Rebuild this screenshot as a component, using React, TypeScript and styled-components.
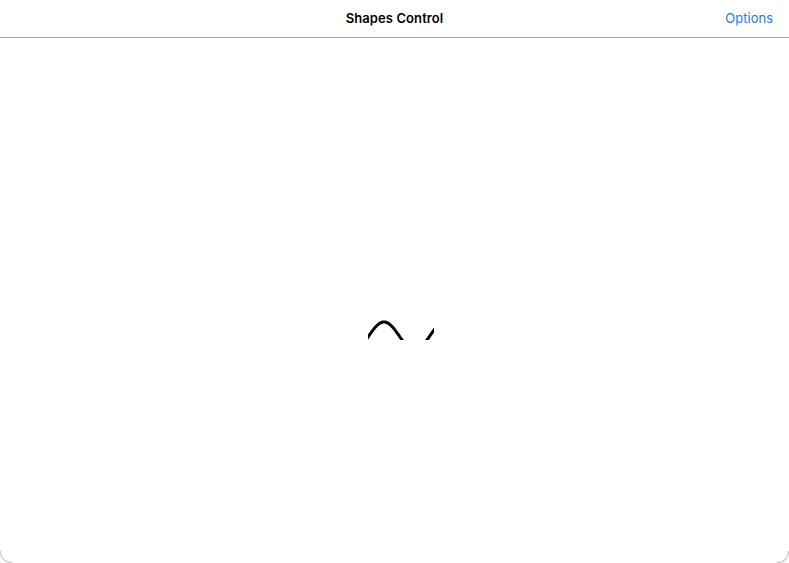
import React from 'react';
import styled, { createGlobalStyle } from 'styled-components';

// Global
const GlobalStyle = createGlobalStyle`
  html, body {
    margin: 0;
    padding: 0;
    background: #ffffff;
  }
  body {
    font-family: Inter, "Liberation Sans", Arial, sans-serif;
  }
`;

// Wave data: sine clipped to the visible window of the canvas
const WAVE_LEFT = 369;
const WAVE_WIDTH = 66;
const WAVE_HEIGHT = 30;
const buildWave = () => {
  const pts: string[] = [];
  for (let x = -4; x <= WAVE_WIDTH + 4; x += 1) {
    const dx = x + WAVE_LEFT - 385;
    const y = 336 - 14 * Math.cos((2 * Math.PI * dx) / 61) - 311;
    pts.push(`${x},${y.toFixed(2)}`);
  }
  return pts.join(' ');
};

const App = () => {
  return (
    <>
      <GlobalStyle />
      <Screen>
        <NavBar>
          <Spacer />
          <Title>Shapes Control</Title>
          <NavButton type='button'>Options</NavButton>
        </NavBar>
        <Canvas>
          <WaveBox>
            <svg width={WAVE_WIDTH} height={WAVE_HEIGHT} viewBox={`0 0 ${WAVE_WIDTH} ${WAVE_HEIGHT}`}>
              <polyline
                points={buildWave()}
                fill='none'
                stroke='#000'
                strokeWidth={3}
                strokeLinecap='butt'
              />
            </svg>
          </WaveBox>
        </Canvas>
        <Corner side='left' />
        <Corner side='right' />
      </Screen>
    </>
  );
};

// Styled
const Screen = styled.div`
  position: relative;
  display: flex;
  flex-direction: column;
  width: 789px;
  height: 563px;
  background: #ffffff;
  overflow: hidden;
`;

const NavBar = styled.header`
  display: grid;
  grid-template-columns: 1fr auto 1fr;
  align-items: center;
  box-sizing: border-box;
  height: 38px;
  padding: 0 16px 2px;
  border-bottom: 1px solid #a9a9a9;
  flex-shrink: 0;
`;

const Spacer = styled.div``;

const Title = styled.h1`
  margin: 0;
  font-size: 13px;
  font-weight: 600;
  color: #000;
  letter-spacing: 0.1px;
`;

const NavButton = styled.button`
  justify-self: end;
  border: none;
  background: none;
  padding: 0;
  margin-top: 1px;
  font-family: inherit;
  font-size: 13px;
  color: #1a7cf5;
  cursor: pointer;
`;

const Canvas = styled.main`
  flex: 1;
  display: flex;
  justify-content: center;
  align-items: flex-start;
  padding-top: 273px;
`;

const WaveBox = styled.div`
  width: ${WAVE_WIDTH}px;
  height: 29px;
  margin-left: 13px;
  overflow: hidden;

  svg {
    display: block;
  }
`;

const Corner = styled.div<{ side: 'left' | 'right' }>`
  position: absolute;
  bottom: 0;
  width: 11px;
  height: 11px;
  border-bottom: 1px solid #c4c4c4;
  ${({ side }) =>
    side === 'left'
      ? `
        left: 0;
        border-left: 1px solid #c4c4c4;
        border-bottom-left-radius: 11px;
      `
      : `
        right: 0;
        border-right: 1px solid #c4c4c4;
        border-bottom-right-radius: 11px;
      `}
`;

export default App;
